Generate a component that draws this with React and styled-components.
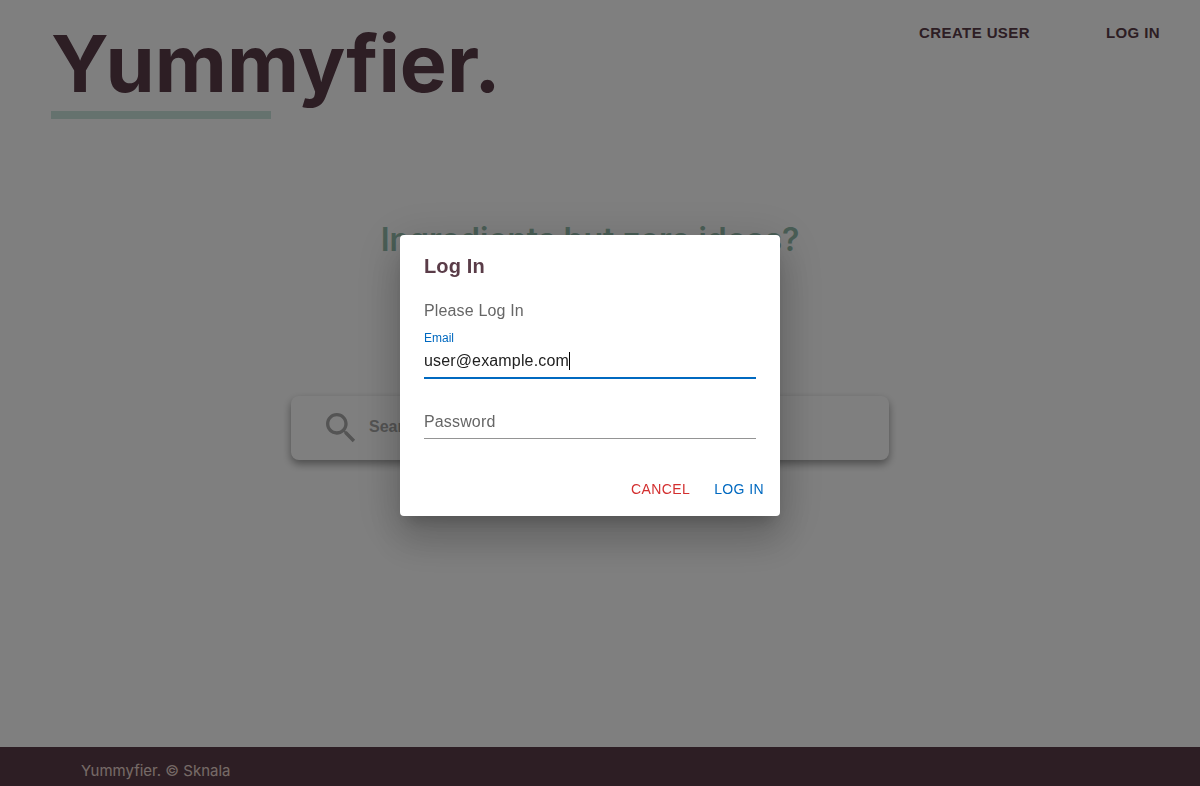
import React, { useState } from 'react';
import styled, { createGlobalStyle, ThemeProvider } from 'styled-components';

const theme = {
  plum: '#5a3c48',
  mint: '#cae4dc',
  green: '#94bcac',
  blue: '#0069c0',
  red: '#d32f2f',
  sans: '"Liberation Sans", Arial, sans-serif',
  display: 'Inter, sans-serif',
};

const GlobalStyle = createGlobalStyle`
  *, *::before, *::after { box-sizing: border-box; }
  body { margin: 0; background: #fff; font-family: ${theme.sans}; }
  h1, h2, p { margin: 0; }
  button, input { font: inherit; border: 0; background: none; }
`;

const Page = styled.div`
  min-height: 100vh;
  display: flex;
  flex-direction: column;
`;

const Header = styled.header`
  display: flex;
  justify-content: space-between;
  align-items: flex-start;
  padding: 15px 40px 0 51px;
`;

const Brand = styled.h1`
  font-family: ${({ theme }) => theme.display};
  font-size: 79px;
  line-height: 96px;
  font-weight: 700;
  color: ${({ theme }) => theme.plum};

  &::after {
    content: '';
    display: block;
    width: 220px;
    height: 8px;
    background: ${({ theme }) => theme.mint};
  }
`;

const Nav = styled.nav`
  display: flex;
  gap: 76px;
  padding-top: 8px;
`;

const NavButton = styled.button`
  padding: 0;
  font-size: 15px;
  line-height: 20px;
  font-weight: 700;
  letter-spacing: 0.4px;
  text-transform: uppercase;
  color: ${({ theme }) => theme.plum};
`;

const Main = styled.main`
  flex: 1;
  display: flex;
  flex-direction: column;
  align-items: center;
  gap: 136px;
  padding: 101px 20px 0 0;
`;

const Tagline = styled.h2`
  font-family: ${({ theme }) => theme.display};
  font-size: 32px;
  line-height: 40px;
  font-weight: 600;
  color: ${({ theme }) => theme.green};
`;

const SearchBar = styled.label`
  display: flex;
  align-items: center;
  gap: 8px;
  width: 598px;
  max-width: 90%;
  height: 64px;
  padding: 0 30px;
  border-radius: 8px;
  background: #fff;
  box-shadow: 0 4px 8px rgba(0, 0, 0, 0.4);
  color: #a8a8a8;
`;

const SearchInput = styled.input`
  flex: 1;
  min-width: 0;
  padding: 0 0 2px;
  font-size: 16px;
  line-height: 20px;
  font-weight: 700;
  outline: 0;

  &::placeholder { color: #a8a8a8; opacity: 1; }
`;

const Footer = styled.footer`
  padding: 14px 81px 5px;
  font-family: ${({ theme }) => theme.display};
  font-size: 15px;
  line-height: 20px;
  color: #fde6df;
  background: ${({ theme }) => theme.plum};

  p { opacity: 0.9; }
`;

const Backdrop = styled.div`
  position: fixed;
  inset: 0;
  display: flex;
  align-items: center;
  justify-content: center;
  padding: 0 20px 35px 0;
  background: rgba(0, 0, 0, 0.5);
`;

const Dialog = styled.form`
  width: 380px;
  border-radius: 4px;
  background: #fff;
  box-shadow:
    0 11px 15px -7px rgba(0, 0, 0, 0.2),
    0 24px 38px 3px rgba(0, 0, 0, 0.14),
    0 9px 46px 8px rgba(0, 0, 0, 0.12);
`;

const DialogTitle = styled.h2`
  padding: 15px 24px 17px;
  font-size: 20px;
  line-height: 32px;
  font-weight: 700;
  letter-spacing: 0.15px;
  color: ${({ theme }) => theme.plum};
`;

const DialogContent = styled.div`
  display: flex;
  flex-direction: column;
  padding: 0 24px 20px;
`;

const DialogText = styled.p`
  font-size: 16px;
  line-height: 24px;
  letter-spacing: 0.15px;
  color: #666;
`;

const Field = styled.div`
  display: flex;
  flex-direction: column;
  justify-content: flex-end;
  height: 48px;
  margin: 8px 0 4px;
  border-bottom: ${({ $active, theme }) => ($active ? `2px solid ${theme.blue}` : '1px solid #949494')};
`;

const FieldLabel = styled.label`
  font-size: 12px;
  line-height: 14px;
  color: ${({ theme }) => theme.blue};
`;

const FieldRow = styled.div`
  display: flex;
  align-items: center;
  height: 32px;
`;

const FieldInput = styled.input`
  field-sizing: content;
  max-width: 100%;
  padding: 0;
  font-size: 16px;
  line-height: 24px;
  letter-spacing: 0.15px;
  color: #212121;
  caret-color: transparent;
  outline: 0;

  &::placeholder { color: #666; opacity: 1; }
`;

const PasswordInput = styled(FieldInput)`
  field-sizing: fixed;
  width: 100%;
  height: 32px;
`;

const Caret = styled.span`
  width: 1px;
  height: 18px;
  background: #000;
`;

const Actions = styled.div`
  display: flex;
  justify-content: flex-end;
  gap: 8px;
  padding: 8px 8px 9px;
`;

const ActionButton = styled.button`
  min-width: 64px;
  padding: 6px 8px;
  border-radius: 4px;
  font-size: 14px;
  line-height: 24px;
  letter-spacing: 0.4px;
  text-transform: uppercase;
  color: ${({ $tone, theme }) => theme[$tone]};
`;

function SearchIcon() {
  return (
    <svg width="40" height="40" viewBox="0 0 24 24" fill="currentColor" aria-hidden="true">
      <path d="M15.5 14h-.79l-.28-.27C15.41 12.59 16 11.11 16 9.5 16 5.91 13.09 3 9.5 3S3 5.91 3 9.5 5.91 16 9.5 16c1.61 0 3.09-.59 4.23-1.57l.27.28v.79l5 4.99L20.49 19l-4.99-5zm-6 0C7.01 14 5 11.99 5 9.5S7.01 5 9.5 5 14 7.01 14 9.5 11.99 14 9.5 14z" />
    </svg>
  );
}

function LoginDialog() {
  const [email, setEmail] = useState('user@example.com');
  return (
    <Backdrop>
      <Dialog role="dialog" aria-modal="true" aria-labelledby="login-title" onSubmit={(e) => e.preventDefault()}>
        <DialogTitle id="login-title">Log In</DialogTitle>
        <DialogContent>
          <DialogText>Please Log In</DialogText>
          <Field $active>
            <FieldLabel htmlFor="email">Email</FieldLabel>
            <FieldRow>
              <FieldInput id="email" value={email} onChange={(e) => setEmail(e.target.value)} />
              <Caret />
            </FieldRow>
          </Field>
          <Field>
            <PasswordInput type="password" placeholder="Password" aria-label="Password" />
          </Field>
        </DialogContent>
        <Actions>
          <ActionButton type="button" $tone="red">Cancel</ActionButton>
          <ActionButton type="submit" $tone="blue">Log In</ActionButton>
        </Actions>
      </Dialog>
    </Backdrop>
  );
}

export default function App() {
  return (
    <ThemeProvider theme={theme}>
      <GlobalStyle />
      <Page>
        <Header>
          <Brand>Yummyfier.</Brand>
          <Nav>
            <NavButton type="button">Create User</NavButton>
            <NavButton type="button">Log In</NavButton>
          </Nav>
        </Header>
        <Main>
          <Tagline>Ingredients but zero ideas?</Tagline>
          <SearchBar>
            <SearchIcon />
            <SearchInput type="text" placeholder="Search" aria-label="Search" />
          </SearchBar>
        </Main>
        <Footer>
          <p>Yummyfier. © Sknala</p>
        </Footer>
      </Page>
      <LoginDialog />
    </ThemeProvider>
  );
}
